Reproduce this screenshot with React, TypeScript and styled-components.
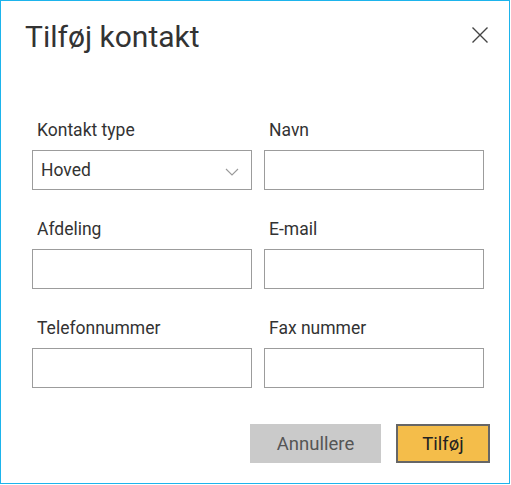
import React, { useState } from 'react';
import styled, { createGlobalStyle } from 'styled-components';

const GlobalStyle = createGlobalStyle`
  html, body {
    margin: 0;
    padding: 0;
    background: #fff;
  }
  * {
    box-sizing: border-box;
  }
`;

const fields = [
  { label: 'Kontakt type', select: true, value: 'Hoved' },
  { label: 'Navn' },
  { label: 'Afdeling' },
  { label: 'E-mail' },
  { label: 'Telefonnummer' },
  { label: 'Fax nummer' },
];

export default function App() {
  const [type, setType] = useState('Hoved');

  return (
    <>
      <GlobalStyle />
      <Dialog>
        <Header>
          <Title>Tilføj kontakt</Title>
          <CloseButton aria-label="Luk">
            <svg width="18" height="18" viewBox="0 0 18 18">
              <path d="M1.5 1.5 L16.5 16.5 M16.5 1.5 L1.5 16.5" stroke="#444" strokeWidth="1.4" fill="none" />
            </svg>
          </CloseButton>
        </Header>
        <FormGrid>
          {fields.map(f => (
            <Field key={f.label}>
              <Label>{f.label}</Label>
              {f.select ? (
                <SelectBox onClick={() => setType(type)}>
                  <span>{type}</span>
                  <svg width="14" height="8" viewBox="0 0 14 8">
                    <path d="M1 1 L7 7 L13 1" stroke="#9a9a9a" strokeWidth="1.1" fill="none" />
                  </svg>
                </SelectBox>
              ) : (
                <Input />
              )}
            </Field>
          ))}
        </FormGrid>
        <Actions>
          <Button>Annullere</Button>
          <Button primary>Tilføj</Button>
        </Actions>
      </Dialog>
    </>
  );
}

const Dialog = styled.div`
  width: 510px;
  height: 484px;
  border: 1px solid #1db4ec;
  background: #fff;
  font-family: Roboto, 'Noto Sans', sans-serif;
  color: #333;
  display: flex;
  flex-direction: column;
`;

const Header = styled.div`
  display: flex;
  align-items: center;
  justify-content: space-between;
  padding: 17px 20px 0 24px;
  height: 54px;
`;

const Title = styled.h1`
  margin: 0;
  font-size: 30px;
  font-weight: 400;
  line-height: 36px;
  color: #333;
`;

const CloseButton = styled.button`
  background: transparent;
  border: none;
  padding: 0;
  width: 18px;
  height: 18px;
  margin-top: -3px;
  cursor: pointer;
  display: flex;
`;

const FormGrid = styled.div`
  display: grid;
  grid-template-columns: 220px 220px;
  column-gap: 12px;
  row-gap: 29px;
  padding: 0 26px 0 31px;
  margin-top: 65px;
`;

const Field = styled.div`
  display: flex;
  flex-direction: column;
`;

const Label = styled.label`
  font-size: 17.5px;
  line-height: 20px;
  color: #333;
  padding-left: 5px;
  margin-bottom: 10px;
`;

const Input = styled.input`
  width: 220px;
  height: 40px;
  border: 1px solid #9c9c9c;
  background: #fff;
  font-family: inherit;
  font-size: 17.5px;
  padding: 0 8px;
  outline: none;
`;

const SelectBox = styled.div`
  width: 220px;
  height: 40px;
  border: 1px solid #9c9c9c;
  display: flex;
  align-items: center;
  justify-content: space-between;
  padding: 0 12px 0 8px;
  font-size: 17.5px;
  color: #333;
  cursor: pointer;

  svg {
    margin-top: 4px;
  }
`;

const Actions = styled.div`
  display: flex;
  justify-content: flex-end;
  gap: 15px;
  padding: 0 19px 0 0;
  margin-top: 36px;
`;

const Button = styled.button<{ primary?: boolean }>`
  height: 39px;
  min-width: ${({ primary }) => (primary ? '94px' : '131px')};
  font-family: inherit;
  font-size: 18.5px;
  cursor: pointer;
  background: ${({ primary }) => (primary ? '#f4bd4a' : '#cacaca')};
  color: ${({ primary }) => (primary ? '#222' : '#555')};
  border: ${({ primary }) => (primary ? '2px solid #666' : 'none')};
`;
